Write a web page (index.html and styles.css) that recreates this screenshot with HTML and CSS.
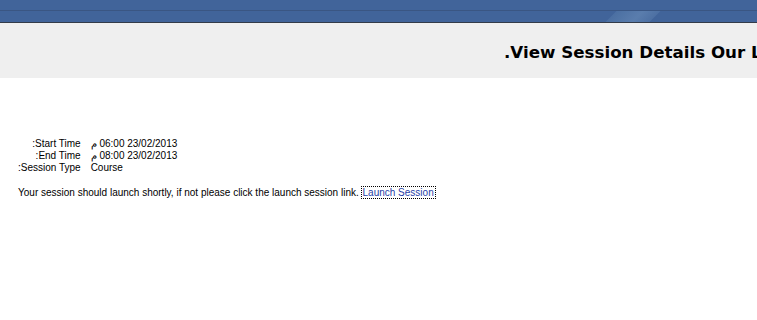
FILE: index.html
```html
<!DOCTYPE html>
<html lang="en">
<head>
  <meta charset="UTF-8">
  <meta name="viewport" content="width=device-width, initial-scale=1.0">
  <title>View Session Details</title>
  <link rel="stylesheet" href="styles.css">
</head>
<body>

  <!-- Top bar -->
  <div class="topbar">
    <div class="topbar-upper"></div>
    <div class="topbar-lower"><span class="shine"></span></div>
  </div>

  <!-- Page title -->
  <div class="page-header">
    <h1>.View Session Details Our Lessons</h1>
  </div>

  <!-- Session details -->
  <div class="content">
    <div class="details">
      <span class="label">:Start Time</span>
      <span class="value"><bdo dir="ltr">م 06:00 23/02/2013</bdo></span>
      <span class="label">:End Time</span>
      <span class="value"><bdo dir="ltr">م 08:00 23/02/2013</bdo></span>
      <span class="label">:Session Type</span>
      <span class="value">Course</span>
    </div>

    <p class="launch-text">
      Your session should launch shortly, if not please click the launch session link.
      <a href="#" class="launch-link">Launch Session</a>
    </p>
  </div>

</body>
</html>
```

FILE: styles.css
```css
body {
  margin: 0;
  font-family: "Liberation Sans", Arial, sans-serif;
  font-size: 10px;
  color: #000;
  background-color: #fff;
}
.topbar {
  background-color: #41649a;
  border-bottom: 1px solid #333b48;
}
.topbar-upper {
  height: 10px;
  border-bottom: 1px solid #3a5683;
}
.topbar-lower {
  height: 11px;
  padding-left: 597px;
  overflow: hidden;
}
.shine {
  display: block;
  width: 44px;
  height: 11px;
  background: linear-gradient(to right, #4b6fa2, #5a7dad 60%, #4d70a3);
  transform: skewX(-45deg);
  margin-left: 14px;
}
.page-header {
  height: 55px;
  background-color: #efefef;
  overflow: hidden;
}
.page-header h1 {
  margin: 0;
  padding: 19px 0 0 504px;
  font-family: "DejaVu Sans", Verdana, sans-serif;
  font-size: 16.7px;
  font-weight: bold;
  white-space: nowrap;
  line-height: 20px;
}
.content {
  padding: 60px 0 0 18px;
}
.details {
  display: grid;
  grid-template-columns: max-content max-content;
  column-gap: 10px;
  line-height: 12px;
}
.label {
  text-align: right;
}
.launch-text {
  margin: 12px 0 0;
  line-height: 14px;
}
.launch-link {
  color: #1f3ea6;
  text-decoration: none;
  outline: 1px dotted #000;
  padding: 0 1px;
}
```
